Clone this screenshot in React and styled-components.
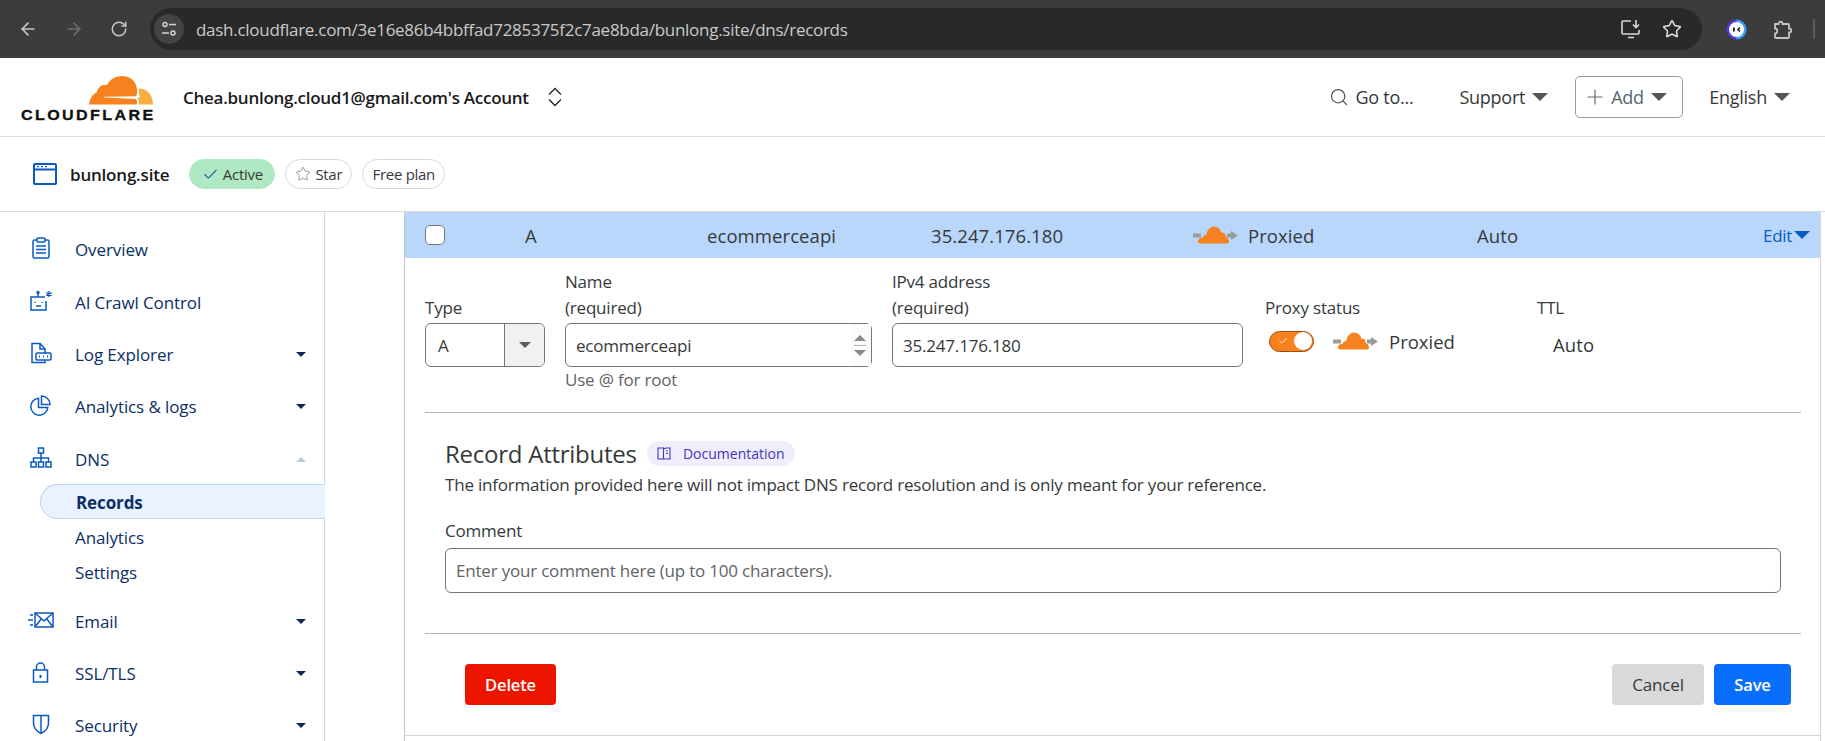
import React from "react";
import styled, { createGlobalStyle } from "styled-components";
import { ArrowLeft, ArrowRight, RotateCw, Star, Check, Search, Plus } from "lucide-react";

const GlobalStyle = createGlobalStyle`
  html, body {
    margin: 0;
    padding: 0;
    background: #fff;
    overflow: hidden;
  }
  * {
    box-sizing: border-box;
  }
  body {
    font-family: "Open Sans", "Noto Sans", sans-serif;
    color: #36393a;
  }
`;

function ProxyCloud() {
  return (
    <CloudSvg viewBox="0 0 45 18">
      <path d="M0 7.500h8v4H0zM34 7.500h4V5l7 4.500-7 4.500v-2.500h-4z" fill="#9a9a9a" />
      <path
        d="M8 17.500c-2.500 0-3.500-1.300-3-2.800.5-1.800 2.300-2.900 4.500-2.900.5-1.500 1.800-2.700 3.700-2.700C14.200 4 17 .5 21 .5c3.800 0 6.800 2.800 7.400 6.300 1.300-.4 2.700 0 3.500 1.200.7 1 .8 2 .6 2.800 1.800.6 3.200 2.500 3.500 4.500.2 1.300-.4 2.200-1.800 2.200z"
        fill="#f6821f"
      />
    </CloudSvg>
  );
}

function CloudflareLogo() {
  return (
    <LogoBox>
      <svg width="64" height="29" viewBox="0 0 64 29">
        <path
          d="M49.500 12.500C58 12 64 19 64 28.500H49.500c1-3 .5-5.500-2-6.500l3.500-.5c-.8-2.500-1.200-6-1.500-9z"
          fill="#fbad41"
        />
        <path
          d="M0 28.500C1 22 4 18 8 16c1-5 5-8 10-7C21 3 27 0 33 0c8 0 14 5 15 13 .3 3 0 5.500-.8 7.200l-32 .6c-.6 0-.6.800 0 .8l31 1.400c1.800.2 2.300 2 1.300 5.500z"
          fill="#f6821f"
        />
      </svg>
      <LogoWord>CLOUDFLARE</LogoWord>
    </LogoBox>
  );
}

function OverviewIcon() {
  return (
    <svg width="20" height="22" viewBox="0 0 20 22" fill="none" stroke="#0a5ac4" strokeWidth="1.500">
      <rect x="2" y="3" width="16" height="18" rx="1.500" />
      <rect x="6" y="1" width="8" height="4" rx="1" fill="#fff" />
      <path d="M5 9h10M5 12.500h10M5 16h10" />
    </svg>
  );
}

function BotIcon() {
  return (
    <svg width="24" height="22" viewBox="0 0 24 22" fill="none" stroke="#0a5ac4" strokeWidth="1.500">
      <path d="M16 7H2v13h15V11" />
      <path d="M9 7V3" />
      <circle cx="9" cy="2.500" r="1" fill="#0a5ac4" />
      <path d="M6 12v1M13 12v1M7 16h5" />
      <path d="M20 1v6M17.200 2.500l5.600 3M22.800 2.500l-5.600 3" strokeWidth="1.300" />
    </svg>
  );
}

function LogIcon() {
  return (
    <svg width="22" height="22" viewBox="0 0 22 22" fill="none" stroke="#0a5ac4" strokeWidth="1.500">
      <path d="M15 11V7l-5-5.500H2v19h13v-2" />
      <path d="M10 1.500V7h5" />
      <rect x="6" y="11" width="15" height="7" rx="1" />
      <path d="M9 14.500h1M13 14.500h1M17 14.500h1" strokeWidth="2" />
    </svg>
  );
}

function PieIcon() {
  return (
    <svg width="21" height="21" viewBox="0 0 21 21" fill="none" stroke="#0a5ac4" strokeWidth="1.500">
      <path d="M8.500 3.200a8.500 8.500 0 1 0 9.300 9.300H8.500z" />
      <path d="M11.500 1a8.500 8.500 0 0 1 8.500 8.500h-8.500z" />
    </svg>
  );
}

function NetworkIcon() {
  return (
    <svg width="22" height="21" viewBox="0 0 22 21" fill="none" stroke="#0a5ac4" strokeWidth="1.500">
      <rect x="8.500" y="1" width="5" height="5" />
      <rect x="1" y="15" width="5" height="5" />
      <rect x="8.500" y="15" width="5" height="5" />
      <rect x="16" y="15" width="5" height="5" />
      <path d="M11 6v9M3.500 15v-4h15v4" />
    </svg>
  );
}

function MailIcon() {
  return (
    <svg width="26" height="16" viewBox="0 0 26 16" fill="none" stroke="#0a5ac4" strokeWidth="1.500">
      <rect x="7" y="1" width="18" height="14" />
      <path d="M7 1l9 8 9-8M7 15l6.500-8.500M25 15l-6.500-8.500" />
      <path d="M2 3h3M0 8h5M2 13h3" />
    </svg>
  );
}

function LockIcon() {
  return (
    <svg width="17" height="21" viewBox="0 0 17 21" fill="none" stroke="#0a5ac4" strokeWidth="1.500">
      <rect x="1.500" y="8" width="14" height="12" />
      <path d="M4.500 8V5a4 4 0 0 1 8 0v3" />
      <path d="M8.500 13v3" strokeWidth="2" />
    </svg>
  );
}

function ShieldIcon() {
  return (
    <svg width="18" height="21" viewBox="0 0 18 21" fill="none" stroke="#0a5ac4" strokeWidth="1.500">
      <path d="M1.500 1.500h15V9c0 5-3.500 8.500-7.500 10.500C5 17.500 1.500 14 1.500 9z" />
      <path d="M9 1.500v18" />
    </svg>
  );
}

const navTop = [
  { label: "Overview", icon: <OverviewIcon /> },
  { label: "AI Crawl Control", icon: <BotIcon /> },
  { label: "Log Explorer", icon: <LogIcon />, caret: "down" },
  { label: "Analytics & logs", icon: <PieIcon />, caret: "down" },
  { label: "DNS", icon: <NetworkIcon />, caret: "up" },
];

const navBottom = [
  { label: "Email", icon: <MailIcon />, caret: "down" },
  { label: "SSL/TLS", icon: <LockIcon />, caret: "down" },
  { label: "Security", icon: <ShieldIcon />, caret: "down" },
];

function NavList({ items }) {
  return items.map((item) => (
    <NavItem key={item.label}>
      <NavIcon>{item.icon}</NavIcon>
      <NavLabel>{item.label}</NavLabel>
      {item.caret === "down" && <Caret $size={5} $color="#0b2a5c" />}
      {item.caret === "up" && <Caret $size={5} $color="#bccbdc" $up />}
    </NavItem>
  ));
}

export default function App() {
  return (
    <Page>
      <GlobalStyle />
      <BrowserBar>
        <BrowserNav>
          <ArrowLeft size={20} color="#c8c8c8" />
          <ArrowRight size={20} color="#6f6f6f" />
          <RotateCw size={18} color="#c8c8c8" />
        </BrowserNav>
        <AddressBar>
          <SiteBadge>
            <svg width="16" height="16" viewBox="0 0 16 16" fill="none" stroke="#d8d8d8" strokeWidth="1.400">
              <circle cx="4" cy="3.500" r="2" />
              <path d="M8 3.500h7M1 12h7" />
              <circle cx="12" cy="12" r="2" />
            </svg>
          </SiteBadge>
          <UrlText>dash.cloudflare.com/3e16e86b4bbffad7285375f2c7ae8bda/bunlong.site/dns/records</UrlText>
          <AddressIcons>
            <svg width="22" height="22" viewBox="0 0 22 22" fill="none" stroke="#d8d8d8" strokeWidth="1.600">
              <path d="M11 3H3a1 1 0 0 0-1 1v11a1 1 0 0 0 1 1h15a1 1 0 0 0 1-1v-3" />
              <path d="M8 19.500h6M16 2v7M13 6.500l3 3 3-3" />
            </svg>
            <Star size={20} color="#e0e0e0" strokeWidth={1.800} />
          </AddressIcons>
        </AddressBar>
        <ExtensionArea>
          <svg width="21" height="21" viewBox="0 0 21 21">
            <circle cx="10.500" cy="10.500" r="10" fill="#5a35e0" />
            <path d="M10.500.5a10 10 0 0 1 0 20z" fill="#3aa0f0" />
            <circle cx="10.500" cy="10.500" r="7.500" fill="#fff" />
            <rect x="7" y="8.500" width="1.800" height="4" fill="#1c1c3c" />
            <path d="M14 8.500l-2 2 2 2" stroke="#1c1c3c" strokeWidth="1.600" fill="none" />
          </svg>
          <svg width="21" height="21" viewBox="0 0 21 21" fill="none" stroke="#c4c4c4" strokeWidth="1.800">
            <path d="M3 5h3.500c0-3 4-3 4 0H16a1 1 0 0 1 1 1v3.500c3 0 3 4 0 4V18a1 1 0 0 1-1 1H4a1 1 0 0 1-1-1v-3.500c3 0 3-5 0-5z" />
          </svg>
          <ToolbarRule />
        </ExtensionArea>
      </BrowserBar>

      <Header>
        <CloudflareLogo />
        <AccountName>Chea.bunlong.cloud1@gmail.com's Account</AccountName>
        <svg width="16" height="20" viewBox="0 0 16 20" fill="none" stroke="#222" strokeWidth="1.300">
          <path d="M2 7.500l6-6 6 6M2 12.500l6 6 6-6" />
        </svg>
        <HeaderActions>
          <SearchLink>
            <Search size={20} color="#555" strokeWidth={1.500} />
            <HeaderText>Go to...</HeaderText>
          </SearchLink>
          <HeaderMenu>
            <HeaderText>Support</HeaderText>
            <Caret $size={8} $color="#555" />
          </HeaderMenu>
          <AddButton>
            <Plus size={24} color="#666" strokeWidth={1.200} />
            <HeaderText>Add</HeaderText>
            <Caret $size={8} $color="#555" />
          </AddButton>
          <HeaderMenu>
            <HeaderText>English</HeaderText>
            <Caret $size={8} $color="#555" />
          </HeaderMenu>
        </HeaderActions>
      </Header>

      <DomainBar>
        <svg width="24" height="22" viewBox="0 0 24 22" fill="none" stroke="#0a5ac4" strokeWidth="2">
          <rect x="1" y="1" width="22" height="20" rx="1" />
          <path d="M1 6.500h22" />
          <path d="M4 3.700h2M8 3.700h2M12 3.700h2" strokeWidth="1.300" />
        </svg>
        <DomainName>bunlong.site</DomainName>
        <Pills>
          <Pill $active $width={86}>
            <Check size={17} color="#1d5b9e" strokeWidth={1.500} />
            Active
          </Pill>
          <Pill $width={67}>
            <Star size={16} color="#888" strokeWidth={1.300} />
            Star
          </Pill>
          <Pill $width={83}>Free plan</Pill>
        </Pills>
      </DomainBar>

      <Body>
        <Sidebar>
          <NavList items={navTop} />
          <SubNav>
            <SubItem $active>Records</SubItem>
            <SubItem>Analytics</SubItem>
            <SubItem>Settings</SubItem>
          </SubNav>
          <NavList items={navBottom} />
        </Sidebar>
        <Gutter />
        <Panel>
          <RecordRow>
            <CheckBox />
            <span>A</span>
            <span>ecommerceapi</span>
            <span>35.247.176.180</span>
            <ProxyCell>
              <ProxyCloud />
              Proxied
            </ProxyCell>
            <span>Auto</span>
            <EditLink>
              Edit
              <Caret $size={8} $color="#0a5ac4" />
            </EditLink>
          </RecordRow>

          <EditForm>
            <Field $width={120}>
              <FieldLabel>Type</FieldLabel>
              <SelectBox>
                <SelectValue>A</SelectValue>
                <SelectArrow>
                  <Caret $size={6} $color="#5c5c5c" />
                </SelectArrow>
              </SelectBox>
            </Field>
            <Field $width={307}>
              <FieldLabel>
                <span>Name</span>
                <span>(required)</span>
              </FieldLabel>
              <InputBox>
                ecommerceapi
                <Stepper>
                  <Caret $size={6} $color="#8a8a8a" $up />
                  <StepperRule />
                  <Caret $size={6} $color="#8a8a8a" />
                </Stepper>
              </InputBox>
              <HelpText>Use @ for root</HelpText>
            </Field>
            <Field $width={351}>
              <FieldLabel>
                <span>IPv4 address</span>
                <span>(required)</span>
              </FieldLabel>
              <InputBox>35.247.176.180</InputBox>
            </Field>
            <Field $width={252}>
              <FieldLabel>Proxy status</FieldLabel>
              <ProxyControl>
                <Toggle>
                  <Check size={10} color="#fff" strokeWidth={2} />
                  <ToggleKnob />
                </Toggle>
                <ProxyCloud />
                <span>Proxied</span>
              </ProxyControl>
            </Field>
            <Field $width={120}>
              <FieldLabel>TTL</FieldLabel>
              <TtlValue>Auto</TtlValue>
            </Field>
          </EditForm>

          <Divider />

          <Attributes>
            <TitleRow>
              <SectionTitle>Record Attributes</SectionTitle>
              <DocPill>
                <svg width="14" height="13" viewBox="0 0 14 13" fill="none" stroke="#3f35c0" strokeWidth="1.100">
                  <path d="M1 1h5.500v11H1zM6.500 2L9 1h4v11H9l-2.500 0" />
                  <path d="M9 4h2M9 6.500h2" />
                </svg>
                Documentation
              </DocPill>
            </TitleRow>
            <Description>
              The information provided here will not impact DNS record resolution and is only meant for your reference.
            </Description>
            <CommentLabel>Comment</CommentLabel>
            <CommentInput>Enter your comment here (up to 100 characters).</CommentInput>
          </Attributes>

          <Divider $top={40} />

          <ActionRow>
            <ActionButton $bg="#ee1500" $color="#fff" $width={91}>
              Delete
            </ActionButton>
            <RightActions>
              <ActionButton $bg="#d9d9d9" $color="#36393a" $width={92} $regular>
                Cancel
              </ActionButton>
              <ActionButton $bg="#0a6efc" $color="#fff" $width={77}>
                Save
              </ActionButton>
            </RightActions>
          </ActionRow>
          <BottomRule />
        </Panel>
      </Body>
    </Page>
  );
}

const Page = styled.div`
  width: 1825px;
  height: 741px;
  overflow: hidden;
  display: flex;
  flex-direction: column;
  background: #fff;
`;

const BrowserBar = styled.div`
  height: 58px;
  flex: none;
  display: flex;
  align-items: center;
  background: #3c3c3c;
  padding-left: 18px;
`;

const BrowserNav = styled.div`
  width: 132px;
  display: flex;
  align-items: center;
  gap: 26px;
`;

const AddressBar = styled.div`
  width: 1552px;
  height: 42px;
  border-radius: 21px;
  background: #292929;
  display: flex;
  align-items: center;
  padding-left: 4px;
`;

const SiteBadge = styled.div`
  width: 30px;
  height: 30px;
  border-radius: 50%;
  background: #444;
  display: flex;
  align-items: center;
  justify-content: center;
`;

const UrlText = styled.div`
  margin-left: 12px;
  font-size: 17px;
  letter-spacing: -0.28px;
  color: #c9c9c9;
  white-space: nowrap;
`;

const AddressIcons = styled.div`
  margin-left: auto;
  padding-right: 20px;
  display: flex;
  align-items: center;
  gap: 20px;
`;

const ExtensionArea = styled.div`
  margin-left: 24px;
  display: flex;
  align-items: center;
  gap: 25px;
`;

const ToolbarRule = styled.div`
  width: 2px;
  height: 20px;
  margin-left: -5px;
  background: #5c5c5c;
`;

const Header = styled.header`
  height: 79px;
  flex: none;
  display: flex;
  align-items: center;
  padding: 0 35px 0 21px;
  border-bottom: 1px solid #dcdcdc;
`;

const LogoBox = styled.div`
  width: 132px;
  display: flex;
  flex-direction: column;
  align-items: flex-end;
  margin-top: 2px;
`;

const LogoWord = styled.div`
  width: 132px;
  margin-top: 5px;
  font-family: "Liberation Sans", sans-serif;
  font-size: 14px;
  line-height: 10px;
  font-weight: 700;
  letter-spacing: 2.05px;
  color: #111;
  white-space: nowrap;
  transform: scaleX(1.15);
  transform-origin: left center;
  -webkit-text-stroke: 0.3px #111;
`;

const AccountName = styled.div`
  margin: 0 18px 0 30px;
  font-size: 17px;
  font-weight: 600;
  letter-spacing: -0.27px;
  color: #1a1a1a;
  white-space: nowrap;
`;

const HeaderActions = styled.div`
  margin-left: auto;
  display: flex;
  align-items: center;
`;

const HeaderText = styled.span`
  font-size: 18px;
  letter-spacing: -0.25px;
  color: #36393a;
`;

const SearchLink = styled.div`
  display: flex;
  align-items: center;
  gap: 6px;
  margin-right: 46px;
`;

const HeaderMenu = styled.div`
  display: flex;
  align-items: center;
  gap: 7px;
  &:nth-child(2) {
    margin-right: 27px;
  }
`;

const AddButton = styled.div`
  width: 108px;
  height: 42px;
  display: flex;
  align-items: center;
  gap: 4px;
  padding-left: 7px;
  margin-right: 26px;
  border: 1px solid #9a9a9a;
  border-radius: 5px;
  ${HeaderText} {
    color: #5a6472;
    margin-right: 3px;
  }
`;

const Caret = styled.span`
  display: inline-block;
  flex: none;
  width: 0;
  height: 0;
  border-left: ${(p) => p.$size}px solid transparent;
  border-right: ${(p) => p.$size}px solid transparent;
  ${(p) =>
    p.$up
      ? `border-bottom: ${p.$size * 1.1}px solid ${p.$color};`
      : `border-top: ${p.$size * 1.1}px solid ${p.$color};`}
`;

const DomainBar = styled.div`
  height: 75px;
  flex: none;
  display: flex;
  align-items: center;
  padding-left: 33px;
  border-bottom: 1px solid #dcdcdc;
`;

const DomainName = styled.div`
  margin: 0 20px 0 13px;
  font-size: 17px;
  font-weight: 600;
  letter-spacing: -0.2px;
  color: #1a1a1a;
`;

const Pills = styled.div`
  display: flex;
  gap: 10px;
`;

const Pill = styled.div`
  width: ${(p) => p.$width}px;
  height: 30px;
  display: flex;
  align-items: center;
  justify-content: center;
  gap: 4px;
  font-size: 15px;
  letter-spacing: -0.3px;
  color: #36393a;
  border-radius: 15px;
  border: 1px solid ${(p) => (p.$active ? "#aee9c4" : "#d9d9d9")};
  background: ${(p) => (p.$active ? "#aee9c4" : "#fff")};
`;

const Body = styled.div`
  flex: 1;
  min-height: 0;
  display: flex;
`;

const Sidebar = styled.nav`
  width: 325px;
  flex: none;
  padding-top: 11.5px;
  border-right: 1px solid #d5d5d5;
`;

const NavItem = styled.div`
  height: 52.4px;
  display: flex;
  align-items: center;
  padding-right: 18px;
`;

const NavIcon = styled.div`
  width: 75px;
  flex: none;
  padding-left: 6px;
  margin-top: -3px;
  display: flex;
  justify-content: center;
`;

const NavLabel = styled.div`
  flex: 1;
  font-size: 17px;
  letter-spacing: -0.1px;
  color: #0b2f66;
`;

const SubNav = styled.div`
  margin: -1.5px 0 5px 40px;
  display: flex;
  flex-direction: column;
`;

const SubItem = styled.div`
  height: 35px;
  display: flex;
  align-items: center;
  padding-left: 35px;
  font-size: 17px;
  letter-spacing: -0.12px;
  font-weight: ${(p) => (p.$active ? 700 : 400)};
  color: #0b2f66;
  ${(p) =>
    p.$active &&
    `
    background: #e9f2fe;
    border: 1px solid #b9d6fb;
    border-right: 0;
    border-radius: 18px 0 0 18px;
    padding-left: 35px;
    padding-top: 2px;
    margin-right: -1px;
    margin-bottom: 1px;
  `}
`;

const Gutter = styled.div`
  width: 79px;
  flex: none;
`;

const Panel = styled.main`
  width: 1417px;
  flex: none;
  border-left: 1px solid #c4c4c4;
  border-right: 1px solid #d5d5d5;
  font-size: 17px;
  letter-spacing: -0.2px;
  color: #36393a;
`;

const RecordRow = styled.div`
  height: 46px;
  display: grid;
  grid-template-columns: 100px 182px 224px 262px 284px 286px 1fr;
  align-items: center;
  padding-left: 20px;
  background: #b9d6fb;
  font-size: 18.5px;
  letter-spacing: 0.08px;
`;

const CheckBox = styled.div`
  width: 20px;
  height: 20px;
  border-radius: 5px;
  border: 1px solid #767676;
  background: #fff;
`;

const CloudSvg = styled.svg`
  width: 45px;
  height: 18px;
  flex: none;
`;

const ProxyCell = styled.span`
  display: flex;
  align-items: center;
  gap: 10px;
`;

const EditLink = styled.span`
  display: flex;
  align-items: center;
  gap: 2px;
  font-size: 17px;
  letter-spacing: -0.3px;
  color: #0a5ac4;
`;

const EditForm = styled.div`
  height: 154px;
  display: flex;
  gap: 20px;
  padding: 11px 0 0 20px;
`;

const Field = styled.div`
  width: ${(p) => p.$width}px;
  flex: none;
  display: flex;
  flex-direction: column;
  &:nth-child(4) {
    margin-left: 2px;
  }
`;

const FieldLabel = styled.div`
  height: 52px;
  display: flex;
  flex-direction: column;
  justify-content: flex-end;
  line-height: 26px;
  margin-bottom: 2px;
`;

const SelectBox = styled.div`
  height: 44px;
  display: flex;
  border: 1px solid #767676;
  border-radius: 6px;
  overflow: hidden;
`;

const SelectValue = styled.div`
  flex: 1;
  display: flex;
  align-items: center;
  padding-left: 12px;
`;

const SelectArrow = styled.div`
  width: 40px;
  display: flex;
  align-items: center;
  justify-content: center;
  border-left: 1px solid #767676;
  background: #f1f1f1;
`;

const InputBox = styled.div`
  height: 44px;
  display: flex;
  align-items: center;
  justify-content: space-between;
  padding-left: 10px;
  border: 1px solid #767676;
  border-radius: 6px;
`;

const Stepper = styled.div`
  height: 100%;
  width: 20px;
  display: flex;
  flex-direction: column;
  align-items: center;
  justify-content: center;
  gap: 4px;
  background: #fbfbfb;
  padding-right: 2px;
`;

const StepperRule = styled.div`
  width: 12px;
  height: 1px;
  background: #b5b5b5;
`;

const HelpText = styled.div`
  line-height: 26px;
  color: #5f6368;
`;

const ProxyControl = styled.div`
  height: 44px;
  display: flex;
  align-items: center;
  padding-left: 4px;
  gap: 19px;
  margin-top: -4px;
  span {
    margin-left: -8px;
    font-size: 18.5px;
    letter-spacing: 0;
  }
`;

const Toggle = styled.div`
  width: 45px;
  height: 21px;
  flex: none;
  display: flex;
  align-items: center;
  justify-content: space-between;
  padding: 0 1px 0 8px;
  background: #f6821f;
  border: 1px solid #9c4c0b;
  border-radius: 11px;
`;

const ToggleKnob = styled.div`
  width: 18px;
  height: 18px;
  border-radius: 50%;
  background: #fff;
`;

const TtlValue = styled.div`
  height: 44px;
  display: flex;
  align-items: center;
  padding-left: 16px;
  margin-top: -1px;
  font-size: 18.5px;
  letter-spacing: 0.08px;
`;

const Divider = styled.div`
  height: 1px;
  margin: ${(p) => p.$top || 0}px 19px 0 20px;
  background: #b3b3b3;
`;

const Attributes = styled.section`
  padding: 23px 39px 0 40px;
`;

const TitleRow = styled.div`
  display: flex;
  align-items: center;
  gap: 10px;
  height: 34px;
`;

const SectionTitle = styled.h2`
  margin: 0;
  font-size: 24px;
  font-weight: 400;
  letter-spacing: -0.25px;
  color: #36393a;
`;

const DocPill = styled.div`
  height: 25px;
  width: 148px;
  display: flex;
  align-items: center;
  justify-content: center;
  gap: 12px;
  border-radius: 13px;
  background: #f0eefc;
  font-size: 14px;
  letter-spacing: 0;
  color: #3f35c0;
`;

const Description = styled.p`
  margin: 2px 0 0;
  line-height: 26px;
`;

const CommentLabel = styled.div`
  margin-top: 20px;
  line-height: 26px;
`;

const CommentInput = styled.div`
  margin-top: 4px;
  height: 45px;
  display: flex;
  align-items: center;
  padding-left: 10px;
  border: 1px solid #767676;
  border-radius: 6px;
  color: #5f6368;
`;

const ActionRow = styled.div`
  display: flex;
  justify-content: space-between;
  padding: 30px 29px 30px 60px;
`;

const RightActions = styled.div`
  display: flex;
  gap: 10px;
`;

const ActionButton = styled.button`
  width: ${(p) => p.$width}px;
  height: 41px;
  border: 0;
  border-radius: 4px;
  background: ${(p) => p.$bg};
  color: ${(p) => p.$color};
  font-family: inherit;
  font-size: ${(p) => (p.$regular ? 17 : 16.5)}px;
  font-weight: ${(p) => (p.$regular ? 500 : 600)};
  letter-spacing: -0.15px;
`;

const BottomRule = styled.div`
  height: 1px;
  background: #d5d5d5;
`;
